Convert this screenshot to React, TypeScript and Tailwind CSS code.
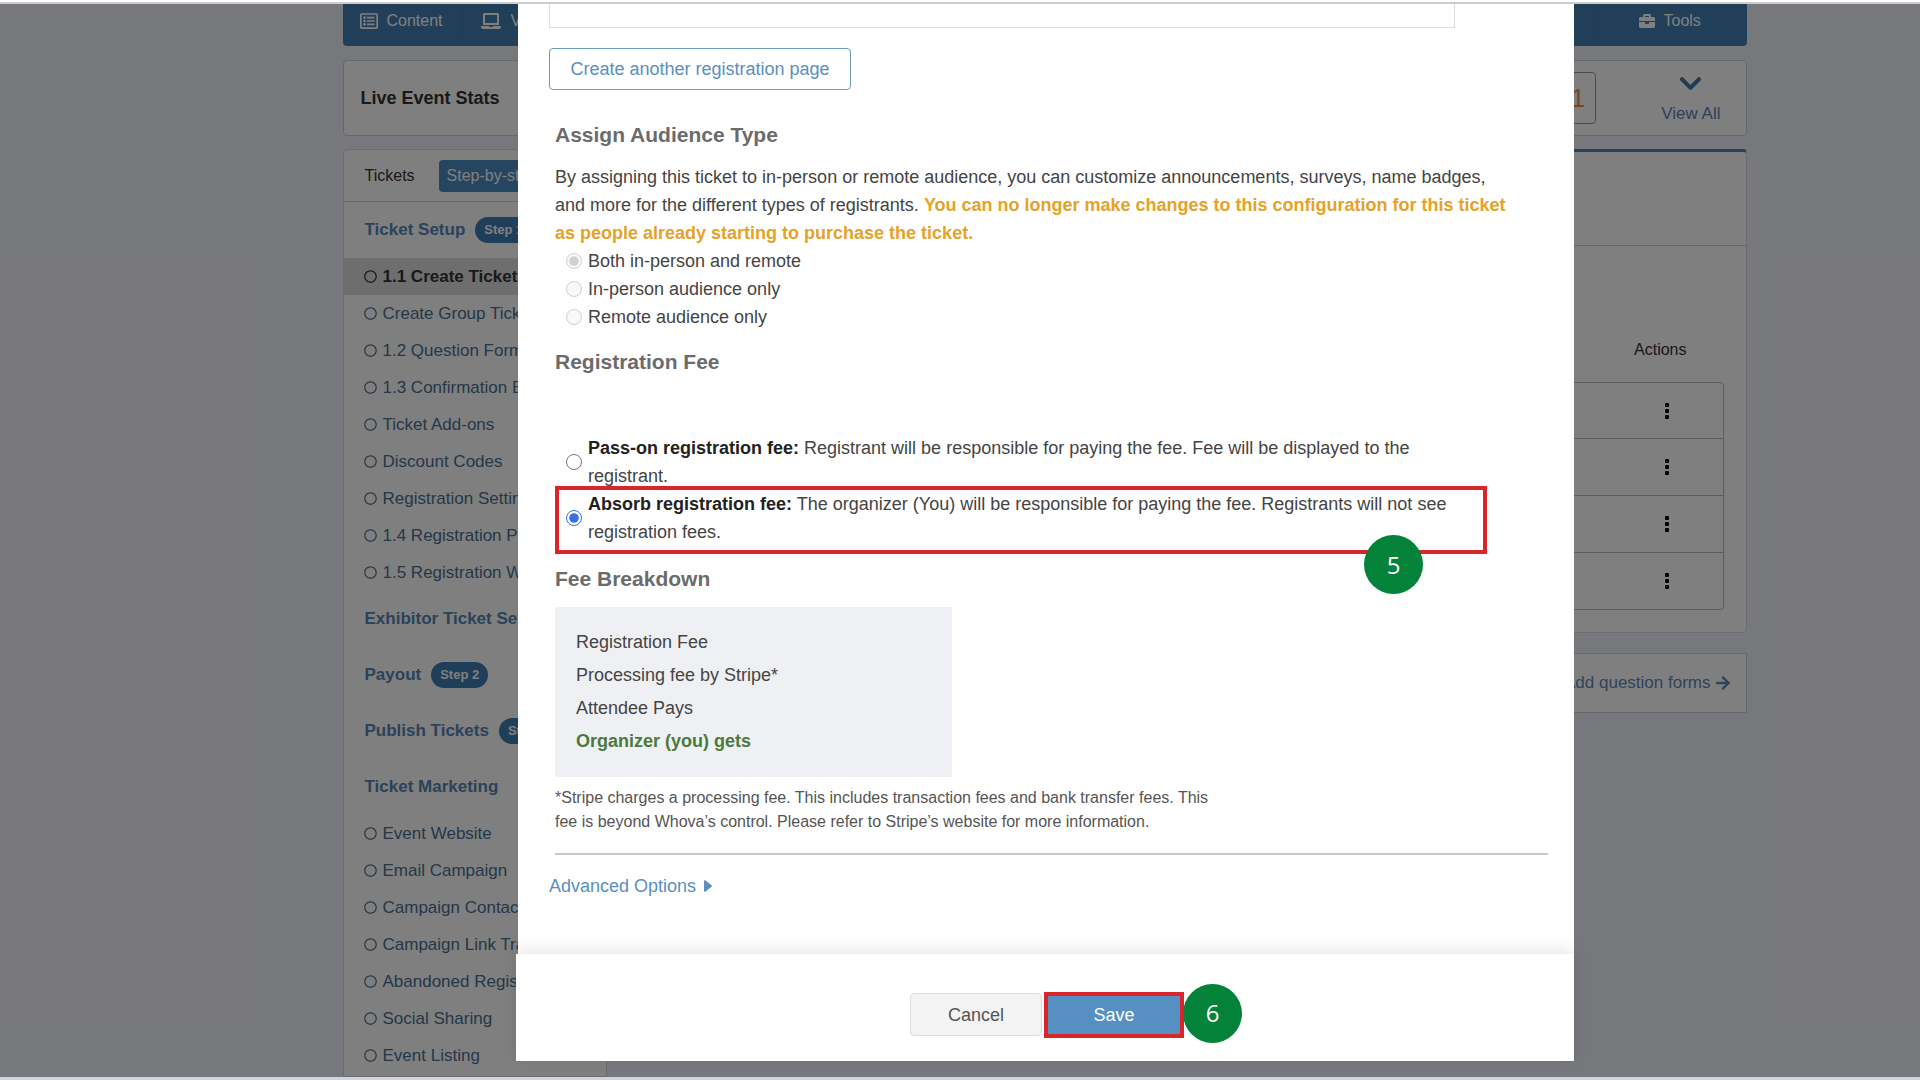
import React from 'react';
import { FaArrowRight, FaBriefcase, FaChevronDown, FaLaptop, FaRegCircle, FaRegListAlt } from 'react-icons/fa';
import { clsx } from 'clsx';

type Section = {
  title: string;
  step?: string;
  items?: string[];
};

const sections: Section[] = [
  {
    title: 'Ticket Setup',
    step: 'Step 1',
    items: [
      '1.1 Create Tickets',
      'Create Group Tickets',
      '1.2 Question Forms',
      '1.3 Confirmation Email',
      'Ticket Add-ons',
      'Discount Codes',
      'Registration Settings',
      '1.4 Registration Page',
      '1.5 Registration Widget',
    ],
  },
  { title: 'Exhibitor Ticket Setup' },
  { title: 'Payout', step: 'Step 2' },
  { title: 'Publish Tickets', step: 'Step 3' },
  {
    title: 'Ticket Marketing',
    items: [
      'Event Website',
      'Email Campaign',
      'Campaign Contacts',
      'Campaign Link Tracking',
      'Abandoned Registration',
      'Social Sharing',
      'Event Listing',
    ],
  },
];

const activeItem = '1.1 Create Tickets';

const audiences = ['Both in-person and remote', 'In-person audience only', 'Remote audience only'];

const feeOptions = [
  {
    id: 'pass-on',
    title: 'Pass-on registration fee:',
    text: 'Registrant will be responsible for paying the fee. Fee will be displayed to the registrant.',
  },
  {
    id: 'absorb',
    title: 'Absorb registration fee:',
    text: 'The organizer (You) will be responsible for paying the fee. Registrants will not see registration fees.',
  },
];

const StepMarker = ({ value, className }: { value: number; className: string }) => (
  <span
    className={clsx(
      "absolute flex size-[59px] items-center justify-center rounded-full bg-[#048239] font-['Open_Sans',sans-serif] text-2xl font-normal text-white",
      className,
    )}
  >
    {value}
  </span>
);

const NavBar = () => (
  <nav className="flex h-[42px] shrink-0 justify-between rounded-b bg-[#457fb3] text-base text-white">
    <div className="flex">
      <a href="#content" className="flex h-[34px] w-[119px] items-center gap-[9px] pl-[17px]">
        <FaRegListAlt size={18} />
        Content
      </a>
      <a href="#virtual" className="flex h-[34px] items-center gap-2.5 border-l border-[#3f75a6] pl-[18px]">
        <FaLaptop size={20} />
        Virtual
      </a>
    </div>
    <a href="#tools" className="flex h-[34px] w-[150px] items-center gap-[9px] border-l border-[#3f75a6] pl-[41px]">
      <FaBriefcase size={16} />
      Tools
    </a>
  </nav>
);

const StatsBar = () => (
  <section className="mt-3.5 flex h-[76px] shrink-0 items-center justify-between rounded-sm border border-[#cdced4] bg-white pl-[17px] pr-[25px]">
    <h2 className="text-lg font-bold text-[#333]">Live Event Stats</h2>
    <div className="flex items-center gap-[65px]">
      <span className="flex h-[52px] w-20 items-center justify-end rounded border border-[#999] pr-2.5 text-[26px] text-[#f0934e]">1</span>
      <button className="flex flex-col items-center gap-1.5 text-[17px] leading-6 text-[#5f83b5]">
        <FaChevronDown size={25} className="text-[#3f78a8]" />
        View All
      </button>
    </div>
  </section>
);

const Sidebar = () => (
  <aside className="w-[264px] shrink-0 rounded-t-sm border border-[#d8d9df] bg-white text-[17px]">
    <div className="flex h-[52px] items-center gap-6 border-b border-[#cfcfcf] pl-[21px]">
      <span className="text-base text-[#333]">Tickets</span>
      <button className="h-8 w-[150px] whitespace-nowrap rounded bg-[#4a8bc2] px-2 text-left text-base text-white">Step-by-step guide</button>
    </div>
    {sections.map(({ title, step, items }) => (
      <div key={title}>
        <h3 className="flex h-14 items-center gap-2.5 whitespace-nowrap pl-[21px] font-bold text-[#5485b5]">
          {title}
          {step && <span className="rounded-full bg-[#3f7cb4] px-[9px] text-[13px] leading-[26px] text-white">{step}</span>}
        </h3>
        {items && (
          <ul>
            {items.map((item) => (
              <li key={item}>
                <a
                  href="#ticket"
                  className={clsx(
                    'flex h-[37px] items-center gap-1.5 whitespace-nowrap pl-5',
                    item === activeItem ? 'bg-[#dcdcdc] font-bold text-[#333]' : 'text-[#4c6f90]',
                  )}
                >
                  <FaRegCircle size={13} className="shrink-0" />
                  {item}
                </a>
              </li>
            ))}
          </ul>
        )}
      </div>
    ))}
  </aside>
);

const TicketsPanel = () => (
  <div className="flex flex-1 flex-col">
    <section className="rounded border border-t-[3px] border-[#d8d9df] border-t-[#4f86b8] bg-white pb-[22px]">
      <div className="h-[94px] border-b border-[#cfcfcf]" />
      <div className="pl-6 pr-[22px] pt-[86px]">
        <table className="w-full border-separate border-spacing-0 rounded">
          <thead>
            <tr>
              <th className="h-[50px] pb-[14px] pr-[37px] text-right text-base font-normal text-[#333]">Actions</th>
            </tr>
          </thead>
          <tbody>
            {[1, 2, 3, 4].map((row) => (
              <tr key={row} className="group">
                <td className="h-[57px] border-x border-b border-[#bbb] pr-[54px] group-first:rounded-t group-first:border-t group-last:rounded-b">
                  <button aria-label="Ticket actions" className="ml-auto flex flex-col gap-0.5">
                    <span className="size-1 rounded-[1px] bg-black" />
                    <span className="size-1 rounded-[1px] bg-black" />
                    <span className="size-1 rounded-[1px] bg-black" />
                  </button>
                </td>
              </tr>
            ))}
          </tbody>
        </table>
      </div>
    </section>
    <a href="#forms" className="mt-5 flex h-[60px] items-center justify-end gap-1 border border-[#cdced4] bg-white pr-[15px] text-[17px] text-[#5b88b5]">
      Add question forms
      <FaArrowRight size={16} />
    </a>
  </div>
);

const TicketDialog = () => (
  <div role="dialog" aria-label="Edit ticket" className="flex w-[1056px] flex-col bg-white text-lg leading-7 text-[#444]">
    <div className="flex-1 overflow-hidden pl-[31px] pr-[26px]">
      <input aria-label="Registration page" className="block h-6 w-[906px] border border-t-0 border-[#ddd]" />
      <button className="mt-5 block h-[42px] w-[302px] rounded-sm border border-[#6d9cbc] text-[#5a8fc0]">
        Create another registration page
      </button>

      <div className="pl-1.5">
        <h2 className="mt-[31px] text-[21px] font-bold text-[#6b6b6b]">Assign Audience Type</h2>
        <p className="mt-3.5 max-w-[960px]">
          By assigning this ticket to in-person or remote audience, you can customize announcements, surveys, name badges, and
          more for the different types of registrants.{' '}
          <strong className="text-[#e5a229]">
            You can no longer make changes to this configuration for this ticket as people already starting to purchase the ticket.
          </strong>
        </p>
        {audiences.map((audience, i) => (
          <label key={audience} className="flex items-center gap-1.5 pl-[11px]">
            <input type="radio" name="audience" disabled defaultChecked={i === 0} className="size-4" />
            {audience}
          </label>
        ))}

        <h2 className="mt-[17px] text-[21px] font-bold text-[#6b6b6b]">Registration Fee</h2>
        <div className="mt-[58px] w-[932px]">
          {feeOptions.map(({ id, title, text }) => (
            <label key={id} className="relative flex items-center gap-1.5 pl-[11px]">
              <input type="radio" name="fee" defaultChecked={id === 'absorb'} className="size-4 shrink-0 accent-[#3b6fe8]" />
              <span>
                <strong className="text-[#222]">{title}</strong> {text}
              </span>
              {id === 'absorb' && (
                <>
                  <span className="absolute inset-x-0 -bottom-2 -top-1 border-4 border-[#d9262b]" />
                  <StepMarker value={5} className="-bottom-12 right-16" />
                </>
              )}
            </label>
          ))}
        </div>

        <h2 className="mt-[19px] text-[21px] font-bold text-[#6b6b6b]">Fee Breakdown</h2>
        <ul className="mt-3.5 w-[397px] bg-[#eff0f3] pb-[19px] pl-[21px] pt-[19px] leading-[33px]">
          <li>Registration Fee</li>
          <li>Processing fee by Stripe*</li>
          <li>Attendee Pays</li>
          <li className="font-bold text-[#4a7a3d]">Organizer (you) gets</li>
        </ul>
        <p className="mt-[9px] w-[660px] text-base leading-6 text-[#555]">
          *Stripe charges a processing fee. This includes transaction fees and bank transfer fees. This fee is beyond Whova’s
          control. Please refer to Stripe’s website for more information.
        </p>
        <hr className="mt-[19px] border-t-2 border-[#c8c8c8]" />
      </div>

      <button className="mt-[17px] flex items-center gap-2 text-[#5a8fc0]">
        Advanced Options
        <svg width="8" height="12" viewBox="0 0 8 12" fill="currentColor">
          <path d="M0 1.2C0 .2 1 0 1.7.6L7.5 5.2c.6.5.6 1.1 0 1.6L1.7 11.4C1 12 0 11.8 0 10.8Z" />
        </svg>
      </button>
    </div>

    <footer className="-ml-0.5 flex h-[107px] items-center justify-center gap-0.5 bg-white pl-1 pt-3.5 shadow-[0_-4px_16px_rgba(0,0,0,0.1)]">
      <button className="h-[43px] w-[132px] rounded-sm border border-[#ddd] bg-[#f3f3f3] text-[#555]">Cancel</button>
      <button className="relative h-[46px] w-[140px] border-4 border-[#d9262b] bg-[#568fc1] text-white">
        Save
        <StepMarker value={6} className="-right-[62px] -top-3" />
      </button>
    </footer>
  </div>
);

export default function App() {
  return (
    <div className="flex h-screen flex-col bg-white font-['Liberation_Sans',Arial,sans-serif]">
      <div className="h-1 shrink-0 border-b-2 border-[#ccc]" />
      <main className="relative flex-1 overflow-hidden bg-[#eff0f8]">
        <div className="flex h-full justify-center pl-[169px]">
          <div className="flex w-[1404px] flex-col">
            <NavBar />
            <StatsBar />
            <div className="mt-[13px] flex flex-1 gap-5">
              <Sidebar />
              <TicketsPanel />
            </div>
          </div>
        </div>
        <div className="absolute inset-0 flex justify-center bg-black/50 pb-4 pl-[172px]">
          <TicketDialog />
        </div>
      </main>
      <div className="h-[3px] shrink-0 bg-[#d3d3df]" />
    </div>
  );
}
